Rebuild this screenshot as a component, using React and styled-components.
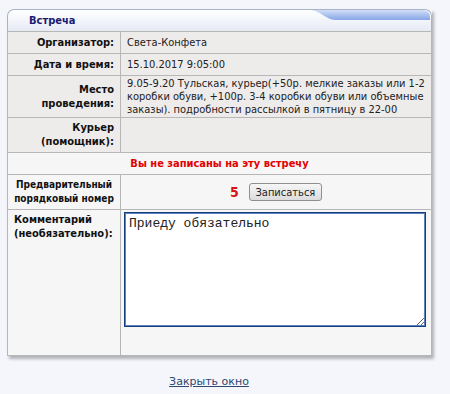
import React from 'react'
import styled, { createGlobalStyle } from 'styled-components'

const GlobalStyle = createGlobalStyle`
  body {
    margin: 0;
    background: #f4f6fc;
    font-family: Tahoma, 'DejaVu Sans Condensed', 'DejaVu Sans', sans-serif;
    font-size: 11px;
    color: #111;
  }
`

const Page = styled.div`
  width: 450px;
  height: 394px;
  padding: 9px 18px 0 7px;
  box-sizing: border-box;
`

const Panel = styled.div`
  width: 425px;
  box-shadow: 2px 3px 3px rgba(0, 0, 0, 0.28);
  background: #f6f6f6;
`

const Header = styled.div`
  position: relative;
  height: 21px;
  border: 1px solid #a9b3c6;
  border-bottom: none;
  border-radius: 7px 7px 0 0;
  background: linear-gradient(#ffffff, #e6eaf5);
  display: flex;
  align-items: center;
  padding-left: 21px;
  overflow: hidden;
`

const Title = styled.span`
  position: relative;
  z-index: 1;
  font-weight: bold;
  color: #1a1a72;
  font-size: 11px;
`

const Tab = styled.svg`
  position: absolute;
  right: 0;
  top: 0;
`

const Table = styled.table`
  width: 100%;
  border-collapse: collapse;
  border: 1px solid #a9b3c6;
  border-top: 1px solid #b7b7b7;
  table-layout: fixed;
`

const Row = styled.tr`
  height: ${p => p.h}px;
  background: ${p => (p.tint ? '#eeebeb' : '#f6f6f6')};
`

const Label = styled.td`
  width: 100px;
  padding: 3px 6px;
  border: 1px solid #b7b7b7;
  font-weight: bold;
  line-height: 14px;
  text-align: ${p => p.align || 'right'};
  vertical-align: ${p => p.valign || 'middle'};
  font-size: ${p => (p.small ? '10px' : '11px')};
  padding-top: ${p => (p.valign === 'top' ? '3px' : '3px')};
`

const Value = styled.td`
  padding: 1px 6px;
  border: 1px solid #b7b7b7;
  line-height: 13px;
  color: #222;
  vertical-align: ${p => p.valign || 'middle'};
  text-align: ${p => p.align || 'left'};
`

const Notice = styled.td`
  border: 1px solid #b7b7b7;
  text-align: center;
  color: #e30000;
  font-weight: bold;
  padding-top: 1px;
`

const SignUp = styled.div`
  display: flex;
  justify-content: center;
  align-items: center;
  gap: 10px;
`

const Number = styled.span`
  color: #d41414;
  font-weight: bold;
  font-size: 14px;
`

const Button = styled.button`
  height: 18px;
  width: 73px;
  padding: 0;
  font-family: inherit;
  font-size: 11px;
  color: #222;
  border: 1px solid #8f8f8f;
  border-radius: 3px;
  background: linear-gradient(#f6f6f6, #dcdcdc);
`

const Comment = styled.textarea`
  display: block;
  box-sizing: border-box;
  width: 302px;
  height: 115px;
  margin: 1px 0 0 -3px;
  padding: 3px 4px;
  border: 1px solid #173f7d;
  box-shadow: inset 0 0 0 1px #5c82bd;
  background: #fff;
  font-family: 'Liberation Mono', 'Courier New', monospace;
  font-size: 13px;
  color: #222;
  outline: none;
`

const Footer = styled.div`
  width: 420px;
  text-align: center;
  margin-top: 19px;
  padding-right: 16px;
  box-sizing: border-box;
`

const CloseLink = styled.a`
  font-family: 'DejaVu Sans', Verdana, sans-serif;
  font-size: 11px;
  color: #2e4870;
  text-decoration: underline;
`

export default function App() {
  return (
    <Page>
      <GlobalStyle />
      <Panel>
        <Header>
          <Tab width="120" height="22" viewBox="0 0 120 22">
            <defs>
              <linearGradient id="tabg" x1="0" y1="0" x2="0" y2="1">
                <stop offset="0" stopColor="#d2def8" />
                <stop offset="1" stopColor="#86a6e6" />
              </linearGradient>
            </defs>
            <path
              d="M0 0 L111 0 Q119 0 119 7 L119 10 L26 10 C14 10 12 2 0 0 Z"
              fill="url(#tabg)"
            />
          </Tab>
          <Title>Встреча</Title>
        </Header>
        <Table>
          <tbody>
            <Row h={22} tint>
              <Label>Организатор:</Label>
              <Value>Света-Конфета</Value>
            </Row>
            <Row h={22} tint>
              <Label>Дата и время:</Label>
              <Value>15.10.2017 9:05:00</Value>
            </Row>
            <Row h={42} tint>
              <Label>Место проведения:</Label>
              <Value valign="top">
                9.05-9.20 Тульская, курьер(+50р. мелкие заказы или 1-2 коробки обуви, +100р. 3-4 коробки обуви или объемные заказы). подробности рассылкой в пятницу в 22-00
              </Value>
            </Row>
            <Row h={34} tint>
              <Label>Курьер (помощник):</Label>
              <Value />
            </Row>
            <Row h={22}>
              <Notice colSpan={2}>Вы не записаны на эту встречу</Notice>
            </Row>
            <Row h={34}>
              <Label small align="center">Предварительный порядковый номер</Label>
              <Value>
                <SignUp>
                  <Number>5</Number>
                  <Button>Записаться</Button>
                </SignUp>
              </Value>
            </Row>
            <Row h={146}>
              <Label align="left" valign="top">Комментарий (необязательно):</Label>
              <Value valign="top">
                <Comment defaultValue="Приеду обязательно" />
              </Value>
            </Row>
          </tbody>
        </Table>
      </Panel>
      <Footer>
        <CloseLink href="#">Закрыть окно</CloseLink>
      </Footer>
    </Page>
  )
}
